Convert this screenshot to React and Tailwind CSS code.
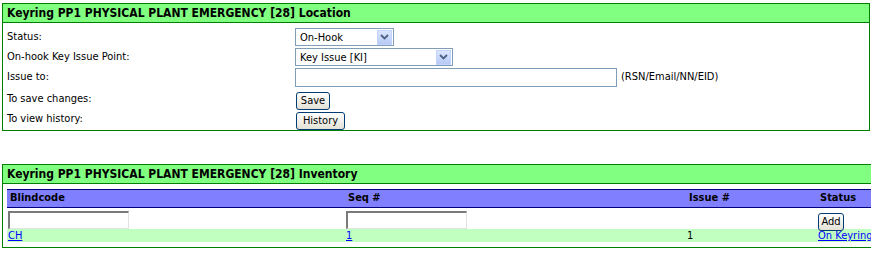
import React from "react";

const font = "font-['DejaVu_Sans_Condensed','DejaVu_Sans',sans-serif]";

const Chevron = () => (
  <span className="flex h-full w-[15px] items-center justify-center border border-[#c3d3fd] bg-gradient-to-b from-[#dbe6fe] to-[#b7caf5]">
    <svg width="9" height="6" viewBox="0 0 9 6">
      <path d="M1 1 L4.5 4.5 L8 1" fill="none" stroke="#4d6185" strokeWidth="1.8" />
    </svg>
  </span>
);

const Select = ({ value, width }) => (
  <div className={`flex h-[18px] items-center border border-[#7f9db9] bg-white pl-[4px] pr-[1px] ${width}`}>
    <span className="flex-1 text-[11px] leading-none text-black">{value}</span>
    <div className="h-[15px]">
      <Chevron />
    </div>
  </div>
);

const XpButton = ({ label, width }) => (
  <button
    className={`h-[18px] rounded-[3px] border border-[#003c74] bg-gradient-to-b from-white to-[#e3e1d6] text-[11px] leading-none text-black ${width}`}
  >
    {label}
  </button>
);

const InsetInput = () => (
  <div className="h-[18px] w-[121px] border-t-2 border-l-2 border-t-[#7a7a7a] border-l-[#7a7a7a] border-b border-r border-b-[#e3e3e3] border-r-[#e3e3e3] bg-white" />
);

const rows = [
  { label: "Status:", control: <Select value="On-Hook" width="w-[99px]" /> },
  { label: "On-hook Key Issue Point:", control: <Select value="Key Issue [KI]" width="w-[158px]" /> },
  {
    label: "Issue to:",
    control: (
      <div className="flex items-center gap-[4px]">
        <div className="h-[19px] w-[322px] border border-[#7f9db9] bg-white" />
        <span className="text-[11px] text-black">(RSN/Email/NN/EID)</span>
      </div>
    ),
  },
  { label: "To save changes:", control: <XpButton label="Save" width="w-[34px] ml-[1px]" /> },
  { label: "To view history:", control: <XpButton label="History" width="w-[49px] ml-[1px]" /> },
];

export default function App() {
  return (
    <div className={`h-[253px] w-[871px] overflow-hidden bg-white pt-[3px] pl-[2px] ${font}`}>
      <div className="w-[868px] border border-[#008000]">
        <div className="h-[19px] border-b border-[#008000] bg-[#80ff80] pl-[4px] text-[12px] font-bold leading-[18px] text-black">
          Keyring PP1 PHYSICAL PLANT EMERGENCY [28] Location
        </div>
        <div className="pt-[4px] pb-[3px] pl-[4px]">
          {rows.map((r) => (
            <div key={r.label} className="grid h-[20px] grid-cols-[288px_1fr] items-center">
              <span className="text-[11px] text-black">{r.label}</span>
              <div>{r.control}</div>
            </div>
          ))}
        </div>
      </div>

      <div className="mt-[33px] w-[900px] border border-[#008000]">
        <div className="h-[19px] border-b border-[#008000] bg-[#80ff80] pl-[4px] text-[12px] font-bold leading-[18px] text-black">
          Keyring PP1 PHYSICAL PLANT EMERGENCY [28] Inventory
        </div>
        <div className="pt-[5px] pb-[5px] pl-[4px]">
          <div className="grid h-[19px] grid-cols-[338px_341px_131px_1fr] items-center border-y border-[#000080] bg-[#8080ff] text-[11px] font-bold text-black">
            <span className="pl-[3px]">Blindcode</span>
            <span className="pl-[3px]">Seq #</span>
            <span className="pl-[3px]">Issue #</span>
            <span className="pl-[3px]">Status</span>
          </div>
          <div className="grid h-[21px] grid-cols-[338px_341px_131px_1fr] items-center">
            <div className="pl-[1px]">
              <InsetInput />
            </div>
            <div className="pl-[1px]">
              <InsetInput />
            </div>
            <div />
            <div className="pl-[1px]">
              <XpButton label="Add" width="w-[26px]" />
            </div>
          </div>
          <div className="grid h-[13px] grid-cols-[338px_341px_131px_1fr] items-center bg-[#c0ffc0] text-[11px] leading-none">
            <a href="#" className="pl-[1px] text-[#0000ff] underline">CH</a>
            <a href="#" className="pl-[1px] text-[#0000ff] underline">1</a>
            <span className="pl-[1px] text-black">1</span>
            <a href="#" className="whitespace-nowrap pl-[1px] text-[#0000ff] underline">On Keyring</a>
          </div>
        </div>
      </div>
    </div>
  );
}
